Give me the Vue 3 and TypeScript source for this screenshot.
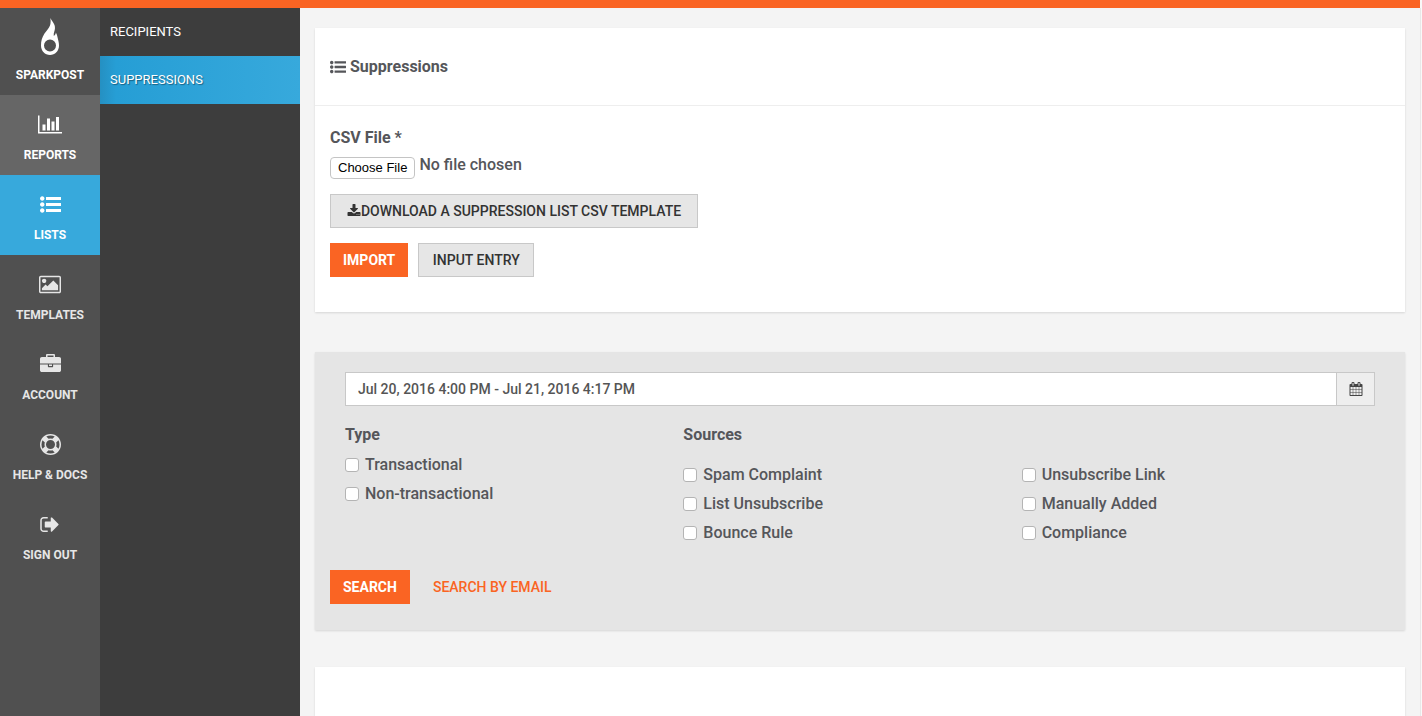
<script setup lang="ts">
import { ref } from 'vue'

interface Icon {
  box: string
  width: number
  height: number
  path: string
}

interface NavItem {
  label: string
  icon: Icon
  state?: 'hover' | 'active'
}

const listPath =
  'M384 1408q0 80-56 136t-136 56-136-56-56-136 56-136 136-56 136 56 56 136zm0-512q0 80-56 136t-136 56-136-56-56-136 56-136 136-56 136 56 56 136zm1408 416v192q0 13-9.5 22.5t-22.5 9.5h-1216q-13 0-22.5-9.5t-9.5-22.5v-192q0-13 9.5-22.5t22.5-9.5h1216q13 0 22.5 9.5t9.5 22.5zm-1408-928q0 80-56 136t-136 56-136-56-56-136 56-136 136-56 136 56 56 136zm1408 416v192q0 13-9.5 22.5t-22.5 9.5h-1216q-13 0-22.5-9.5t-9.5-22.5v-192q0-13 9.5-22.5t22.5-9.5h1216q13 0 22.5 9.5t9.5 22.5zm0-512v192q0 13-9.5 22.5t-22.5 9.5h-1216q-13 0-22.5-9.5t-9.5-22.5v-192q0-13 9.5-22.5t22.5-9.5h1216q13 0 22.5 9.5t9.5 22.5z'

const navItems: NavItem[] = [
  {
    label: 'Reports',
    state: 'hover',
    icon: {
      box: '0 0 2048 1792',
      width: 24,
      height: 21,
      path: 'M640 896v512h-256v-512h256zm384-512v1024h-256v-1024h256zm1024 1152v128h-2048v-1536h128v1408h1920zm-640-896v768h-256v-768h256zm384-384v1152h-256v-1152h256z',
    },
  },
  {
    label: 'Lists',
    state: 'active',
    icon: { box: '0 0 1792 1792', width: 21, height: 21, path: listPath },
  },
  {
    label: 'Templates',
    icon: {
      box: '-64 0 1920 1792',
      width: 22,
      height: 21,
      path: 'M576 576q0 80-56 136t-136 56-136-56-56-136 56-136 136-56 136 56 56 136zm1024 384v448h-1408v-192l320-320 160 160 512-512zm96-704h-1600q-13 0-22.5 9.5t-9.5 22.5v1216q0 13 9.5 22.5t22.5 9.5h1600q13 0 22.5-9.5t9.5-22.5v-1216q0-13-9.5-22.5t-22.5-9.5zm160 32v1216q0 66-47 113t-113 47h-1600q-66 0-113-47t-47-113v-1216q0-66 47-113t113-47h1600q66 0 113 47t47 113z',
    },
  },
  {
    label: 'Account',
    icon: {
      box: '0 0 1792 1792',
      width: 21,
      height: 21,
      path: 'M640 256h512v-128h-512v128zm1152 640v480q0 66-47 113t-113 47h-1472q-66 0-113-47t-47-113v-480h672v160q0 26 19 45t45 19h320q26 0 45-19t19-45v-160h672zm-768 0v128h-256v-128h256zm768-480v384h-1792v-384q0-66 47-113t113-47h352v-160q0-40 28-68t68-28h576q40 0 68 28t28 68v160h352q66 0 113 47t47 113z',
    },
  },
  {
    label: 'Help & Docs',
    icon: {
      box: '0 0 1792 1792',
      width: 21,
      height: 21,
      path: 'M896 0q182 0 348 71t286 191 191 286 71 348-71 348-191 286-286 191-348 71-348-71-286-191-191-286-71-348 71-348 191-286 286-191 348-71zm0 128q-190 0-361 90l194 194q82-28 167-28t167 28l194-194q-171-90-361-90zm-678 1129l194-194q-28-82-28-167t28-167l-194-194q-90 171-90 361t90 361zm678 407q190 0 361-90l-194-194q-82 28-167 28t-167-28l-194 194q171 90 361 90zm0-384q159 0 271.5-112.5t112.5-271.5-112.5-271.5-271.5-112.5-271.5 112.5-112.5 271.5 112.5 271.5 271.5 112.5zm484-217l194 194q90-171 90-361t-90-361l-194 194q28 82 28 167t-28 167z',
    },
  },
  {
    label: 'Sign Out',
    icon: {
      box: '64 0 1664 1792',
      width: 20,
      height: 21,
      path: 'M704 1440q0 4 1 20t.5 26.5-3 23.5-10 19.5-20.5 6.5h-320q-119 0-203.5-84.5t-84.5-203.5v-704q0-119 84.5-203.5t203.5-84.5h320q13 0 22.5 9.5t9.5 22.5q0 4 1 20t.5 26.5-3 23.5-10 19.5-20.5 6.5h-320q-66 0-113 47t-47 113v704q0 66 47 113t113 47h312l11.5 1 11.5 3 8 5.5 7 9 2 13.5zm928-544q0 26-19 45l-544 544q-19 19-45 19t-45-19-19-45v-288h-448q-26 0-45-19t-19-45v-384q0-26 19-45t45-19h448v-288q0-26 19-45t45-19 45 19l544 544q19 19 19 45z',
    },
  },
]

const types = ['Transactional', 'Non-transactional']
const sourceColumns = [
  ['Spam Complaint', 'List Unsubscribe', 'Bounce Rule'],
  ['Unsubscribe Link', 'Manually Added', 'Compliance'],
]

const dateRange = ref('Jul 20, 2016 4:00 PM - Jul 21, 2016 4:17 PM')
const selected = ref<string[]>([])
</script>

<template>
  <div class="page">
    <nav class="sidebar" aria-label="Main">
      <a class="brand" href="#">
        <svg width="20" height="38" viewBox="0 0 20 38" aria-hidden="true">
          <path
            fill-rule="evenodd"
            d="M10.300 0C11.500 2.500 13.600 4.500 14.500 7C15.300 9.500 15 11.500 14.300 13.500C13.800 15 13.500 16.500 13.800 18C15 17.200 15.700 16.300 15.800 14.500C16.800 16 17.300 17.800 17.700 20C18.200 22.500 19 24.500 19 27.500C19 33 15 37 10 37S1 33 1 27.500C1 23 2 19.500 4.500 15.500C6.500 12.500 9 10.500 10 7.500C10.800 5 10.800 2.500 10.300 0ZM10 21.500a6 6 0 1 0 0 12a6 6 0 1 0 0-12Z"
          />
        </svg>
        <span>SparkPost</span>
      </a>
      <a v-for="item in navItems" :key="item.label" class="nav-item" :class="item.state" href="#">
        <svg :width="item.icon.width" :height="item.icon.height" :viewBox="item.icon.box" aria-hidden="true">
          <path :d="item.icon.path" />
        </svg>
        <span>{{ item.label }}</span>
      </a>
    </nav>

    <nav class="submenu" aria-label="Lists">
      <a href="#">Recipients</a>
      <a class="current" href="#" aria-current="page">Suppressions</a>
    </nav>

    <main class="content">
      <section class="card">
        <header class="card-header">
          <svg width="16" height="16" viewBox="0 0 1792 1792" aria-hidden="true"><path :d="listPath" /></svg>
          <h1>Suppressions</h1>
        </header>
        <form class="import-form" @submit.prevent>
          <label class="title" for="csv-file">CSV File *</label>
          <input id="csv-file" class="file" type="file" accept=".csv" />
          <button class="btn download" type="button">
            <svg width="14" height="14" viewBox="64 0 1664 1792" aria-hidden="true">
              <path
                d="M1344 1344q0-26-19-45t-45-19-45 19-19 45 19 45 45 19 45-19 19-45zm256 0q0-26-19-45t-45-19-45 19-19 45 19 45 45 19 45-19 19-45zm128-224v320q0 40-28 68t-68 28h-1472q-40 0-68-28t-28-68v-320q0-40 28-68t68-28h465l135 136q58 56 136 56t136-56l136-136h464q40 0 68 28t28 68zm-325-569q17 41-14 70l-448 448q-18 19-45 19t-45-19l-448-448q-31-29-14-70 17-39 59-39h256v-448q0-26 19-45t45-19h256q26 0 45 19t19 45v448h256q42 0 59 39z"
              />
            </svg>
            Download a Suppression List CSV Template
          </button>
          <div class="actions">
            <button class="btn primary" type="submit">Import</button>
            <button class="btn entry" type="button">Input Entry</button>
          </div>
        </form>
      </section>

      <form class="card search" @submit.prevent>
        <div class="date-range">
          <input v-model="dateRange" type="text" aria-label="Date range" />
          <button type="button" aria-label="Open calendar">
            <svg width="14" height="14" viewBox="64 0 1664 1792" aria-hidden="true">
              <path
                d="M192 1664h288v-288h-288v288zm352 0h320v-288h-320v288zm-352-352h288v-320h-288v320zm352 0h320v-320h-320v320zm-352-384h288v-288h-288v288zm736 736h320v-288h-320v288zm-384-736h320v-288h-320v288zm768 736h288v-288h-288v288zm-384-352h320v-320h-320v320zm-352-864v-288q0-13-9.5-22.5t-22.5-9.5h-64q-13 0-22.5 9.5t-9.5 22.5v288q0 13 9.5 22.5t22.5 9.5h64q13 0 22.5-9.5t9.5-22.5zm736 864h288v-320h-288v320zm-384-384h320v-288h-320v288zm384 0h288v-288h-288v288zm32-480v-288q0-13-9.5-22.5t-22.5-9.5h-64q-13 0-22.5 9.5t-9.5 22.5v288q0 13 9.5 22.5t22.5 9.5h64q13 0 22.5-9.5t9.5-22.5zm384-64v1280q0 52-38 90t-90 38h-1408q-52 0-90-38t-38-90v-1280q0-52 38-90t90-38h128v-96q0-66 47-113t113-47h64q66 0 113 47t47 113v96h384v-96q0-66 47-113t113-47h64q66 0 113 47t47 113v96h128q52 0 90 38t38 90z"
              />
            </svg>
          </button>
        </div>
        <div class="filters">
          <fieldset class="types">
            <legend class="title">Type</legend>
            <label v-for="type in types" :key="type" class="check">
              <input v-model="selected" type="checkbox" :value="type" />{{ type }}
            </label>
          </fieldset>
          <fieldset class="sources">
            <legend class="title">Sources</legend>
            <div class="source-columns">
              <div v-for="(column, i) in sourceColumns" :key="i">
                <label v-for="source in column" :key="source" class="check">
                  <input v-model="selected" type="checkbox" :value="source" />{{ source }}
                </label>
              </div>
            </div>
          </fieldset>
        </div>
        <div class="search-actions">
          <button class="btn primary" type="submit">Search</button>
          <a href="#">Search by Email</a>
        </div>
      </form>

      <section class="card results" aria-label="Results"></section>
    </main>
  </div>
</template>

<style>
body {
  margin: 0;
  background: #f9f9f9;
}
</style>

<style scoped>
.page,
.page * {
  box-sizing: border-box;
}

.page {
  display: flex;
  min-height: 100vh;
  margin-right: 2px;
  border-top: 8px solid #fa6423;
  background: #f4f4f4;
  color: #55565a;
  font: 500 16px/20px Roboto, 'Open Sans', sans-serif;
}

svg {
  display: block;
  flex: none;
  fill: currentColor;
}

a {
  text-decoration: none;
}

.sidebar {
  flex: 0 0 100px;
  background: #505050;
}

.sidebar a {
  display: flex;
  flex-direction: column;
  align-items: center;
  color: #e6e6e6;
  font-size: 12px;
  font-weight: 700;
  line-height: 20px;
  text-transform: uppercase;
}

.sidebar .brand {
  height: 87px;
  padding-top: 10px;
  gap: 9px;
  color: #fff;
}

.sidebar .nav-item {
  height: 80px;
  padding-top: 19px;
  gap: 10px;
}

.sidebar .hover {
  background: #666;
  color: #fff;
}

.sidebar .active {
  background: #37a9dc;
  color: #fff;
}

.submenu {
  flex: 0 0 200px;
  background: #3d3d3d;
}

.submenu a {
  display: block;
  height: 48px;
  padding: 0 10px;
  color: #fff;
  font-size: 13px;
  font-weight: 400;
  line-height: 48px;
  text-transform: uppercase;
}

.submenu .current {
  background: linear-gradient(90deg, #2590c2 0, #269ed5 16px, #37a9dc 100%);
  text-shadow: 1px 1px 1px rgba(0, 0, 0, 0.4);
}

.content {
  display: flex;
  flex: 1;
  flex-direction: column;
  min-width: 0;
  padding: 20px 15px 0;
  box-shadow: 1px 0 #e8e8e8;
}

.card {
  background: #fff;
  box-shadow: 0 1px 2px rgba(0, 0, 0, 0.12);
}

.card-header {
  display: flex;
  align-items: center;
  gap: 4px;
  height: 78px;
  padding: 0 15px;
  border-bottom: 1px solid #eee;
}

h1 {
  margin: 0;
  font-size: 16px;
  font-weight: 700;
  line-height: 20px;
}

.title {
  padding: 0;
  font-weight: 700;
  line-height: 20px;
}

.import-form {
  display: flex;
  flex-direction: column;
  align-items: flex-start;
  padding: 22px 15px 35px;
}

.file {
  width: 320px;
  height: 26px;
  margin: 7px 0 13px;
  color: inherit;
  font: inherit;
}

.file::file-selector-button {
  height: 22px;
  margin: 0 4px 0 0;
  padding: 0 7px;
  border: 1px solid #c4c4c4;
  border-radius: 4px;
  background: #fff;
  color: #000;
  font: 13px/18px 'Liberation Sans', Arial, sans-serif;
  vertical-align: -2px;
}

.btn {
  display: inline-flex;
  align-items: center;
  justify-content: center;
  height: 34px;
  padding: 0 12px;
  border: 1px solid #c8c8c8;
  border-radius: 0;
  background: #e6e6e6;
  color: #333;
  font: 500 14px/20px Roboto, 'Open Sans', sans-serif;
  text-transform: uppercase;
}

.btn.primary {
  border-color: #fa6423;
  background: #fa6423;
  color: #fff;
  font-weight: 700;
}

.btn.download {
  min-width: 368px;
}

.btn.entry {
  min-width: 116px;
}

.actions {
  display: flex;
  gap: 10px;
  margin-top: 15px;
}

.search {
  margin-top: 40px;
  padding: 20px 30px 26px;
  background: #e5e5e5;
}

.date-range {
  display: flex;
  height: 34px;
  border: 1px solid #c8c8c8;
}

.date-range input {
  flex: 1;
  min-width: 0;
  padding: 0 12px;
  border: 0;
  background: #fff;
  color: #555;
  font: 500 14px/20px Roboto, 'Open Sans', sans-serif;
}

.date-range button {
  display: flex;
  align-items: center;
  justify-content: center;
  width: 38px;
  padding: 0;
  border: 0;
  border-left: 1px solid #c8c8c8;
  background: #eee;
  color: #444;
}

.filters {
  display: grid;
  grid-template-columns: 1fr 2fr;
  margin-top: 19px;
  padding-right: 15px;
}

fieldset {
  min-width: 0;
  margin: 0;
  padding: 0;
  border: 0;
}

.types .title {
  margin-bottom: 10px;
}

.sources .title {
  margin-bottom: 20px;
}

.source-columns {
  display: grid;
  grid-template-columns: 1fr 1fr;
}

.check {
  display: flex;
  align-items: center;
  gap: 6px;
  height: 20px;
  margin-bottom: 9px;
}

.check input {
  flex: none;
  width: 14px;
  height: 14px;
  margin: 0;
  border: 1px solid #b4b4b4;
  border-radius: 3px;
  background: #fff;
  appearance: none;
}

.check input:checked {
  background: #37a9dc;
}

.search-actions {
  display: flex;
  align-items: center;
  gap: 23px;
  margin: 18px 0 0 -15px;
}

.search-actions a {
  color: #fa6423;
  font-size: 14px;
  text-transform: uppercase;
}

.results {
  flex: 1;
  min-height: 49px;
  margin-top: 37px;
}
</style>
